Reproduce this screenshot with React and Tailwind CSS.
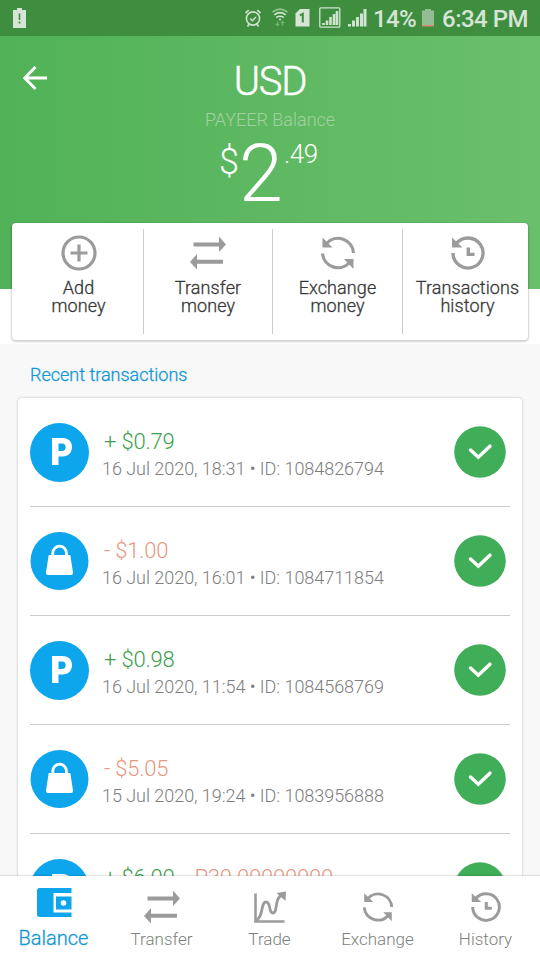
import React from "react";

function StatusIcons() {
  return (
    <svg className="h-9 w-[130px] shrink-0" viewBox="243 0 130 36" fill="none" stroke="#cfe3cf">
      {/* alarm */}
      <circle cx="253" cy="18.5" r="6.6" strokeWidth="1.6" />
      <path d="M250 18.5l2.3 2.2 3.7-3.7" strokeWidth="1.4" />
      <path d="M245.5 13.2l3.2-3M260.5 13.2l-3.2-3M249 24.3l-1.5 2.2M257 24.3l1.5 2.2" strokeWidth="1.6" />
      {/* wifi */}
      <path d="M272.5 12.2q7.5-6.2 15 0" strokeWidth="1.5" stroke="#8fc48f" />
      <path d="M274.3 14.8q5.7-4.4 11.4 0M276.3 17.5q3.7-2.6 7.4 0" strokeWidth="1.6" />
      <circle cx="280" cy="19.6" r="1" fill="#cfe3cf" stroke="none" />
      <path d="M277.5 21.5v4m-1.8-1.6l1.8 1.8 1.8-1.8M282.5 25.5v-4m-1.6 1.6l1.6-1.8 1.6 1.8" stroke="#74b574" strokeWidth="1.2" />
      {/* sim */}
      <path d="M300 9h9.5v17.5H295.5V13.5z" fill="#d6e5d6" stroke="none" />
      <path d="M299.8 15.4l3-1.6V22.5" stroke="#3f8e40" strokeWidth="2" />
      {/* boxed signal */}
      <rect x="319.8" y="7.8" width="20" height="19.4" rx="1" strokeWidth="1.3" />
      <path d="M323.5 25v-2M327 25v-4.5M330.5 25v-8M334 25v-11M337 25v-14" strokeWidth="2.6" />
      {/* signal */}
      <path d="M349.5 26.5v-2.5M353.5 26.5v-6M357.5 26.5v-9.5M361.5 26.5v-13M365 26.5v-17.5" strokeWidth="3" />
    </svg>
  );
}

function PlusIcon() {
  return (
    <svg className="h-9 w-9" viewBox="0 0 36 36" fill="none" stroke="#9b9b9b">
      <circle cx="18" cy="18" r="16" strokeWidth="3.2" />
      <path d="M18 9.500v17M9.500 18h17" strokeWidth="3.2" />
    </svg>
  );
}

function TransferIcon({ className }) {
  return (
    <svg className={className} viewBox="0 0 36 36" fill="#9b9b9b">
      <path d="M3.500 7.500H29V1.500L36 9.500 29 17V11.500H3.500zM33 24.700H7V19L0 27l7 7.500v-5.800h26z" />
    </svg>
  );
}

function ExchangeIcon({ className }) {
  return (
    <svg className={className} viewBox="0 0 36 36" fill="none" stroke="#9b9b9b" strokeWidth="3.2">
      <path d="M6.500 8.500A15.500 15.500 0 0 1 33.500 18" />
      <path d="M2.500 18.500A15.500 15.500 0 0 0 29.500 27.500" />
      <path d="M2.500 2.500V12.500H12.500zM33.500 34V24H24z" fill="#9b9b9b" stroke="none" />
    </svg>
  );
}

function HistoryIcon({ className }) {
  return (
    <svg className={className} viewBox="0 0 36 36" fill="none" stroke="#9b9b9b" strokeWidth="3.3">
      <path d="M6 9A15 15 0 1 1 3 18" />
      <path d="M2 2.500V12.500H12.500z" fill="#9b9b9b" stroke="none" />
      <path d="M18.300 12.500V19.400H24.500" strokeWidth="3.4" />
    </svg>
  );
}

function WalletIcon() {
  return (
    <svg className="h-[30px] w-[36px]" viewBox="0 0 36 30">
      <path d="M3.500 0H35.500V5H17.500V24.500H35.500V29H3.500Q1 29 1 26.500V2.500Q1 0 3.500 0z" fill="#0da5eb" />
      <path d="M20 8.500H35.500V21.500H20z" fill="#0da5eb" />
      <circle cx="27.500" cy="15" r="2.800" fill="#fff" />
    </svg>
  );
}

function TradeIcon() {
  return (
    <svg className="h-[32px] w-[32px]" viewBox="0 0 32 32" fill="none" stroke="#9b9b9b">
      <path d="M1.500 2.500V30.500H30.500" strokeWidth="2.600" />
      <path d="M3 29C10 24 6.500 11 12 11S14 22 19 22 20 7 28 4" strokeWidth="2.800" />
      <path d="M22.500 2L32 0.500 31.500 10z" fill="#9b9b9b" stroke="none" />
    </svg>
  );
}

function PayeerBadge() {
  return (
    <svg className="h-[59px] w-[59px] shrink-0" viewBox="0 0 59 59">
      <circle cx="29.500" cy="29.500" r="29.500" fill="#0da5eb" />
      <path fillRule="evenodd" fill="#fff" d="M22 15H32.500C38.500 15 42 18.500 42 24S38.500 33.500 32.500 33.500H28.500V42H22zM28.500 20.500V28H32C34.500 28 35.700 26.500 35.700 24.200S34.500 20.500 32 20.500z" />
    </svg>
  );
}

function BagBadge() {
  return (
    <svg className="h-[59px] w-[59px] shrink-0" viewBox="0 0 59 59">
      <circle cx="29.500" cy="29" r="29" fill="#0da5eb" />
      <path d="M18.700 23H40.300L43 40.500Q43.200 43 41 43H18Q15.800 43 16 40.500z" fill="#fff" />
      <path d="M22.800 24V21a6.800 6.800 0 0 1 13.600 0V24" fill="none" stroke="#fff" strokeWidth="2.800" />
    </svg>
  );
}

function CheckBadge() {
  return (
    <svg className="h-[52px] w-[52px] shrink-0" viewBox="0 0 52 52">
      <circle cx="26" cy="26" r="25.800" fill="#40ae58" />
      <path d="M16.500 24L24.300 31.200L35.900 20.200" fill="none" stroke="#fff" strokeWidth="3.500" strokeLinecap="round" />
    </svg>
  );
}

const actions = [
  { top: "Add", bottom: "money", icon: <PlusIcon /> },
  { top: "Transfer", bottom: "money", icon: <TransferIcon className="h-9 w-9" /> },
  { top: "Exchange", bottom: "money", icon: <ExchangeIcon className="h-9 w-9" /> },
  { top: "Transactions", bottom: "history", icon: <HistoryIcon className="h-9 w-9" /> },
];

const columnStyles = ["w-[132px] pl-0.5", "w-[129px]", "w-[130px]", "w-[125px] pl-[4px]"];

const rows = [
  { amount: "+ $0.79", meta: "16 Jul 2020, 18:31 • ID: 1084826794", credit: true },
  { amount: "- $1.00", meta: "16 Jul 2020, 16:01 • ID: 1084711854", credit: false },
  { amount: "+ $0.98", meta: "16 Jul 2020, 11:54 • ID: 1084568769", credit: true },
  { amount: "- $5.05", meta: "15 Jul 2020, 19:24 • ID: 1083956888", credit: false },
  { amount: "+ $6.00", extra: "P30.00000000", meta: "", credit: true },
];

const tabs = [
  { label: "Transfer", icon: <TransferIcon className="h-9 w-9" /> },
  { label: "Trade", icon: <TradeIcon /> },
  { label: "Exchange", icon: <ExchangeIcon className="h-8 w-8" /> },
  { label: "History", icon: <HistoryIcon className="h-8 w-8" /> },
];

export default function App() {
  return (
    <div className="flex h-[960px] w-[540px] flex-col overflow-hidden bg-[#f8f8f8] font-[Roboto,sans-serif]">
      <div className="flex h-9 shrink-0 items-center justify-between bg-[#3f8e40] pr-3 pl-[13px] text-[#d6e5d6]">
        <svg className="h-5 w-[13px] shrink-0" viewBox="0 0 13 20">
          <path d="M4 0h5v2h4v18H0V2h4z" fill="#d6e5d6" />
          <path d="M6.500 5.500v6.500M6.500 13.500v2" stroke="#3f8e40" strokeWidth="1.600" />
        </svg>
        <div className="flex shrink-0 items-center">
          <StatusIcons />
          <span className="w-[46px] pt-0.5 text-[24px] leading-9 font-medium tracking-[-0.6px] whitespace-nowrap">14%</span>
          <svg className="ml-[3px] h-[19px] w-3 shrink-0" viewBox="0 0 12 19">
            <path d="M3 0h6v1.500h3V16H0V1.500h3z" fill="#94bd94" />
            <path d="M0 16h12v1.500H0z" fill="#d98b6b" />
          </svg>
          <span className="ml-[8px] w-[86px] pt-0.5 text-[24px] leading-9 font-medium tracking-[-0.5px] whitespace-nowrap">6:34 PM</span>
        </div>
      </div>

      <header className="h-[253px] shrink-0 bg-linear-to-r from-[#51b257] to-[#6abf6c]">
        <div className="grid h-[64px] grid-cols-[60px_1fr_60px] pt-[24px]">
          <svg className="mt-[5px] ml-[23px] h-[26px] w-[25px]" viewBox="0 0 25 26" fill="none" stroke="#fff" strokeWidth="2.800">
            <path d="M24 13H2M12.500 2L1.800 13L12.500 24" />
          </svg>
          <h1 className="pt-px text-center text-[40px] leading-[42px] font-light tracking-[-1.2px] text-white [-webkit-text-stroke:0.5px]">USD</h1>
        </div>
        <p className="mt-[9px] text-center text-[18px] leading-[22px] font-light text-[#a3d0a3]">PAYEER Balance</p>
        <div className="ml-[219px] flex items-start font-light text-white">
          <span className="mt-[10px] w-[20px] text-[36px] leading-[42px]">$</span>
          <span className="mt-[3px] w-[45px] text-[79px] leading-[80px]">2</span>
          <span className="mt-[7px] text-[26px] leading-[32px] tracking-[-0.4px]">.49</span>
        </div>
      </header>

      <div className="flex h-[55px] shrink-0 bg-white px-3">
        <div className="-mt-[66px] flex h-[117px] w-full rounded bg-white shadow-[0_1px_2px_1px_rgba(0,0,0,0.18)]">
          {actions.map((a, i) => (
            <div key={a.top} className={`flex items-start py-[6px] ${columnStyles[i]}`}>
              <div className="flex flex-1 flex-col items-center pt-[6px]">
                {a.icon}
                <div className="mt-[8px] text-center text-[18px] leading-[18px] font-light tracking-[0.1px] whitespace-nowrap text-[#383838] [-webkit-text-stroke:0.3px]">
                  {a.top}
                  <br />
                  {a.bottom}
                </div>
              </div>
              {i < 3 && <div className="h-[105px] w-px bg-[#ccc]" />}
            </div>
          ))}
        </div>
      </div>

      <h2 className="mt-[20px] ml-[30px] shrink-0 text-[18px] leading-[22px] font-light text-[#0f97d6] [-webkit-text-stroke:0.3px]">Recent transactions</h2>

      <main className="mx-[18px] mt-[12px] min-h-0 flex-1 overflow-hidden rounded-t bg-white px-3 shadow-[0_0_2px_1px_rgba(0,0,0,0.12)]">
        {rows.map((r) => (
          <div key={r.amount} className="flex h-[109px] items-center border-b border-[#cbcbcb] pr-1">
            {r.credit ? <PayeerBadge /> : <BagBadge />}
            <div className="ml-[14px] flex-1 pt-[6px] whitespace-nowrap">
              <div className="pl-px text-[22px] leading-[28px] font-light tracking-[-0.2px]">
                <span className={r.credit ? "text-[#3ba04a]" : "text-[#e8977f]"}>{r.amount}</span>
                {r.extra && <span className="ml-[20px] text-[#e8977f]">{r.extra}</span>}
              </div>
              <div className="h-[26px] -ml-px text-[18px] leading-[26px] font-light tracking-[-0.04px] text-[#7d7d7d]">{r.meta}</div>
            </div>
            <CheckBadge />
          </div>
        ))}
      </main>

      <nav className="z-10 flex h-[84px] shrink-0 bg-white shadow-[0_-1px_1px_rgba(0,0,0,0.1)]">
        <div className="flex w-[107px] flex-col items-center">
          <div className="mt-[12px] h-[37px]">
            <WalletIcon />
          </div>
          <span className="text-[20px] leading-[26px] font-light text-[#0f97d6] [-webkit-text-stroke:0.3px]">Balance</span>
        </div>
        {tabs.map((t) => (
          <div key={t.label} className="flex w-[108px] flex-col items-center pl-px">
            <div className="mt-[12px] flex h-[38px] items-center">{t.icon}</div>
            <span className="text-[17px] leading-[26px] font-light text-[#7c827c]">{t.label}</span>
          </div>
        ))}
      </nav>
    </div>
  );
}
